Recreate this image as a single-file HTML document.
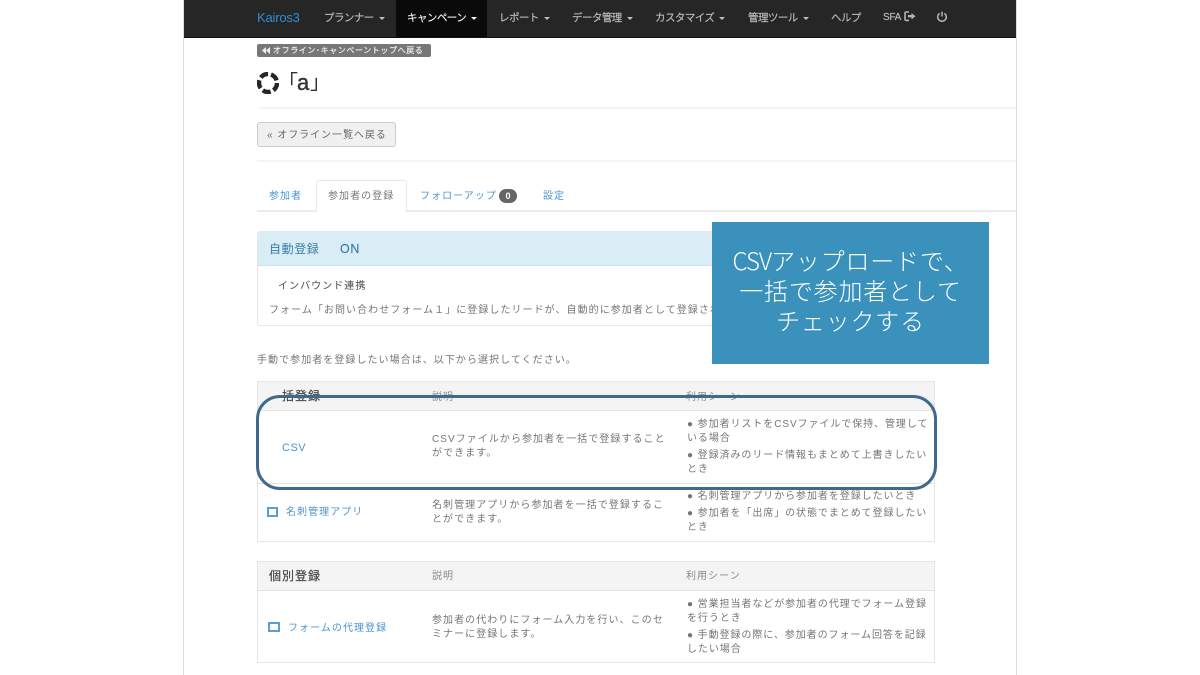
<!DOCTYPE html>
<html lang="ja"><head><meta charset="utf-8"><style>
html,body{margin:0;padding:0;background:#fff}
#p{position:relative;width:1200px;height:675px;overflow:hidden;background:#fff;font-family:"Liberation Sans","Noto Sans CJK JP",sans-serif;color:#777;filter:blur(.35px)}
.b{position:absolute;box-sizing:border-box}
.t{position:absolute;white-space:nowrap;font-size:10px;line-height:14px;letter-spacing:1.05px;color:#757575;transform:translateY(1px)}
.n{color:#bdbdbd;font-weight:400;font-size:10.5px;letter-spacing:-.55px;top:10px;-webkit-text-stroke:.15px #bdbdbd}
.c{display:inline-block;width:0;height:0;border:3px solid transparent;border-top:3.5px solid currentColor;border-bottom:0;margin-left:5px;vertical-align:1px}
.l{color:#4a94d0}
.h{font-size:12px;color:#444;letter-spacing:1px;line-height:16px;transform:none;-webkit-text-stroke:.2px #444}
.s{color:#8a8a8a}
.r{letter-spacing:.93px}
.m{transform:translateY(2px)}
</style></head><body><div id="p">
<div class="b" style="left:183px;top:0;width:834px;height:675px;border-left:1px solid #ddd;border-right:1px solid #ddd"></div>
<div class="b" style="left:184px;top:0;width:832px;height:38px;background:#262626;border-bottom:1px solid #111"></div>
<div class="b" style="left:396px;top:0;width:91px;height:37px;background:#0a0a0a"></div>
<div class="t" style="left:257px;top:9px;font-size:13px;letter-spacing:-.2px;color:#2f8fd3;line-height:16px">Kairos3</div>
<div class="t n" style="left:324px">プランナー<i class="c"></i></div>
<div class="t n" style="left:407px;color:#f2f2f2;-webkit-text-stroke:.15px #f2f2f2">キャンペーン<i class="c"></i></div>
<div class="t n" style="left:499px">レポート<i class="c"></i></div>
<div class="t n" style="left:572px">データ管理<i class="c"></i></div>
<div class="t n" style="left:655px">カスタマイズ<i class="c"></i></div>
<div class="t n" style="left:748px">管理ツール<i class="c"></i></div>
<div class="t n" style="left:831px">ヘルプ</div>
<div class="t n" style="left:883px;letter-spacing:-.3px;font-size:10px">SFA</div>
<svg class="b" style="left:904px;top:11px" width="12" height="11" viewBox="0 0 12 11"><path d="M5 1H2.2Q1 1 1 2.2V8Q1 9.400 2.200 9.400H5" fill="none" stroke="#b4b4b4" stroke-width="1.600"/><path d="M4 4H7.500V2L11.500 5.200 7.500 8.400V6.400H4Z" fill="#b4b4b4"/></svg>
<svg class="b" style="left:936px;top:11px" width="12" height="12" viewBox="0 0 12 12"><path d="M3.600 2.400A4.300 4.300 0 1 0 8.400 2.400M6 .8V5.500" fill="none" stroke="#b4b4b4" stroke-width="1.500"/></svg>

<div class="b" style="left:257px;top:44px;width:174px;height:13px;background:#777;border-radius:2px"></div>
<svg class="b" style="left:262px;top:47px" width="8" height="7" viewBox="0 0 8 7"><path d="M4 0V7L0 3.500ZM8 0V7L4 3.500Z" fill="#eee"/></svg>
<div class="t" style="left:273px;top:43px;font-size:8px;line-height:13px;color:#eee;letter-spacing:.6px;-webkit-text-stroke:.2px #eee">オフライン･キャンペーントップへ戻る</div>
<svg class="b" style="left:257px;top:72px" width="22" height="22" viewBox="0 0 22 22"><circle cx="11" cy="11" r="9" fill="none" stroke="#262626" stroke-width="4.400" stroke-dasharray="8.300 3"/></svg>
<div class="t" style="left:278px;top:69px;font-size:20px;line-height:26px;color:#333;letter-spacing:0">「</div>
<div class="t" style="left:297px;top:69px;font-size:22px;line-height:26px;color:#333;letter-spacing:0;-webkit-text-stroke:.4px #333">a</div>
<div class="t" style="left:310px;top:69px;font-size:20px;line-height:26px;color:#333;letter-spacing:0">」</div>
<div class="b" style="left:257px;top:107px;width:759px;height:2px;background:#f5f5f5"></div>
<div class="b" style="left:257px;top:122px;width:139px;height:25px;background:#f0f0f0;border:1px solid #ccc;border-radius:3px"></div>
<div class="t" style="left:267px;top:128px;color:#666;letter-spacing:.95px">« オフライン一覧へ戻る</div>
<div class="b" style="left:257px;top:160px;width:759px;height:2px;background:#f5f5f5"></div>

<div class="b" style="left:257px;top:210px;width:759px;height:2px;background:#ececec"></div>
<div class="b" style="left:316px;top:180px;width:91px;height:32px;background:#fff;border:1px solid #e8e8e8;border-bottom:0;border-radius:3px 3px 0 0"></div>
<div class="t l" style="left:269px;top:189px">参加者</div>
<div class="t" style="left:328px;top:189px;color:#777">参加者の登録</div>
<div class="t l" style="left:420px;top:189px">フォローアップ</div>
<div class="b" style="left:499px;top:189px;width:18px;height:14px;border-radius:7px;background:#666;color:#fff;font-size:9px;font-weight:700;text-align:center;line-height:14px">0</div>
<div class="t l" style="left:543px;top:189px">設定</div>

<div class="b" style="left:257px;top:231px;width:560px;height:95px;background:#fff;border:1px solid #e6e6e6;border-radius:3px"></div>
<div class="b" style="left:258px;top:232px;width:558px;height:34px;background:#d9edf7;border-bottom:1px solid #cfe3ee"></div>
<div class="t" style="left:269px;top:241px;font-size:12px;line-height:16px;color:#3a7ea6;letter-spacing:.6px;transform:none">自動登録</div>
<div class="t" style="left:340px;top:241px;font-size:12.500px;line-height:16px;color:#3a7ea6;letter-spacing:.6px;transform:none;-webkit-text-stroke:.15px #3a7ea6">ON</div>
<div class="t" style="left:278px;top:279px;color:#555;-webkit-text-stroke:.08px #555">インバウンド連携</div>
<div class="t" style="left:269px;top:303px">フォーム「お問い合わせフォーム１」に登録したリードが、自動的に参加者として登録され</div>
<div class="t m" style="left:257px;top:352px">手動で参加者を登録したい場合は、以下から選択してください。</div>

<div class="b" style="left:257px;top:381px;width:678px;height:161px;border:1px solid #e6e6e6;background:#fff"></div>
<div class="b" style="left:258px;top:382px;width:676px;height:29px;background:#f4f4f4;border-bottom:1px solid #e3e3e3"></div>
<div class="t h" style="left:282px;top:388px">括登録</div>
<div class="t s m" style="left:432px;top:389px">説明</div>
<div class="t s m" style="left:686px;top:389px">利用シーン</div>
<div class="t l" style="left:282px;top:440px;font-size:11px;letter-spacing:.5px">CSV</div>
<div class="t m" style="left:432px;top:431px">CSVファイルから参加者を一括で登録すること</div>
<div class="t m" style="left:432px;top:445px">ができます。</div>
<div class="t r m" style="left:687px;top:416px">● 参加者リストをCSVファイルで保持、管理して</div>
<div class="t r m" style="left:687px;top:430px">いる場合</div>
<div class="t r m" style="left:687px;top:447px">● 登録済みのリード情報もまとめて上書きしたい</div>
<div class="t r m" style="left:687px;top:461px">とき</div>
<div class="b" style="left:258px;top:483px;width:676px;height:1px;background:#e3e3e3"></div>
<div class="b" style="left:267px;top:507px;width:11px;height:10px;border:2px solid #5a9ed6"></div>
<div class="t l m" style="left:286px;top:504px">名刺管理アプリ</div>
<div class="t m" style="left:432px;top:497px">名刺管理アプリから参加者を一括で登録するこ</div>
<div class="t m" style="left:432px;top:511px">とができます。</div>
<div class="t r m" style="left:687px;top:488px">● 名刺管理アプリから参加者を登録したいとき</div>
<div class="t r m" style="left:687px;top:505px">● 参加者を「出席」の状態でまとめて登録したい</div>
<div class="t r m" style="left:687px;top:519px">とき</div>

<div class="b" style="left:257px;top:561px;width:678px;height:102px;border:1px solid #e6e6e6;background:#fff"></div>
<div class="b" style="left:258px;top:562px;width:676px;height:29px;background:#f4f4f4;border-bottom:1px solid #e3e3e3"></div>
<div class="t h" style="left:269px;top:568px">個別登録</div>
<div class="t s m" style="left:432px;top:568px">説明</div>
<div class="t s m" style="left:686px;top:568px">利用シーン</div>
<div class="b" style="left:268px;top:622px;width:12px;height:10px;border:2px solid #5a9ed6"></div>
<div class="t l m" style="left:288px;top:620px">フォームの代理登録</div>
<div class="t m" style="left:432px;top:612px">参加者の代わりにフォーム入力を行い、このセ</div>
<div class="t m" style="left:432px;top:626px">ミナーに登録します。</div>
<div class="t r m" style="left:687px;top:596px">● 営業担当者などが参加者の代理でフォーム登録</div>
<div class="t r m" style="left:687px;top:610px">を行うとき</div>
<div class="t r m" style="left:687px;top:627px">● 手動登録の際に、参加者のフォーム回答を記録</div>
<div class="t r m" style="left:687px;top:641px">したい場合</div>

<div class="b" style="left:256px;top:395px;width:681px;height:95px;border:3px solid #41698c;border-radius:24px"></div>
<div class="b" style="left:712px;top:222px;width:277px;height:142px;background:#3a91bb"></div>
<div class="t" style="left:712px;width:277px;top:244px;text-align:center;font-family:'Noto Sans CJK JP',sans-serif;font-size:24px;line-height:30px;letter-spacing:.8px;color:#fff;font-weight:300">
<span style="letter-spacing:-1px">CSV</span>アップロードで、<br>一括で参加者として<br>チェックする</div>
</div></body></html>
